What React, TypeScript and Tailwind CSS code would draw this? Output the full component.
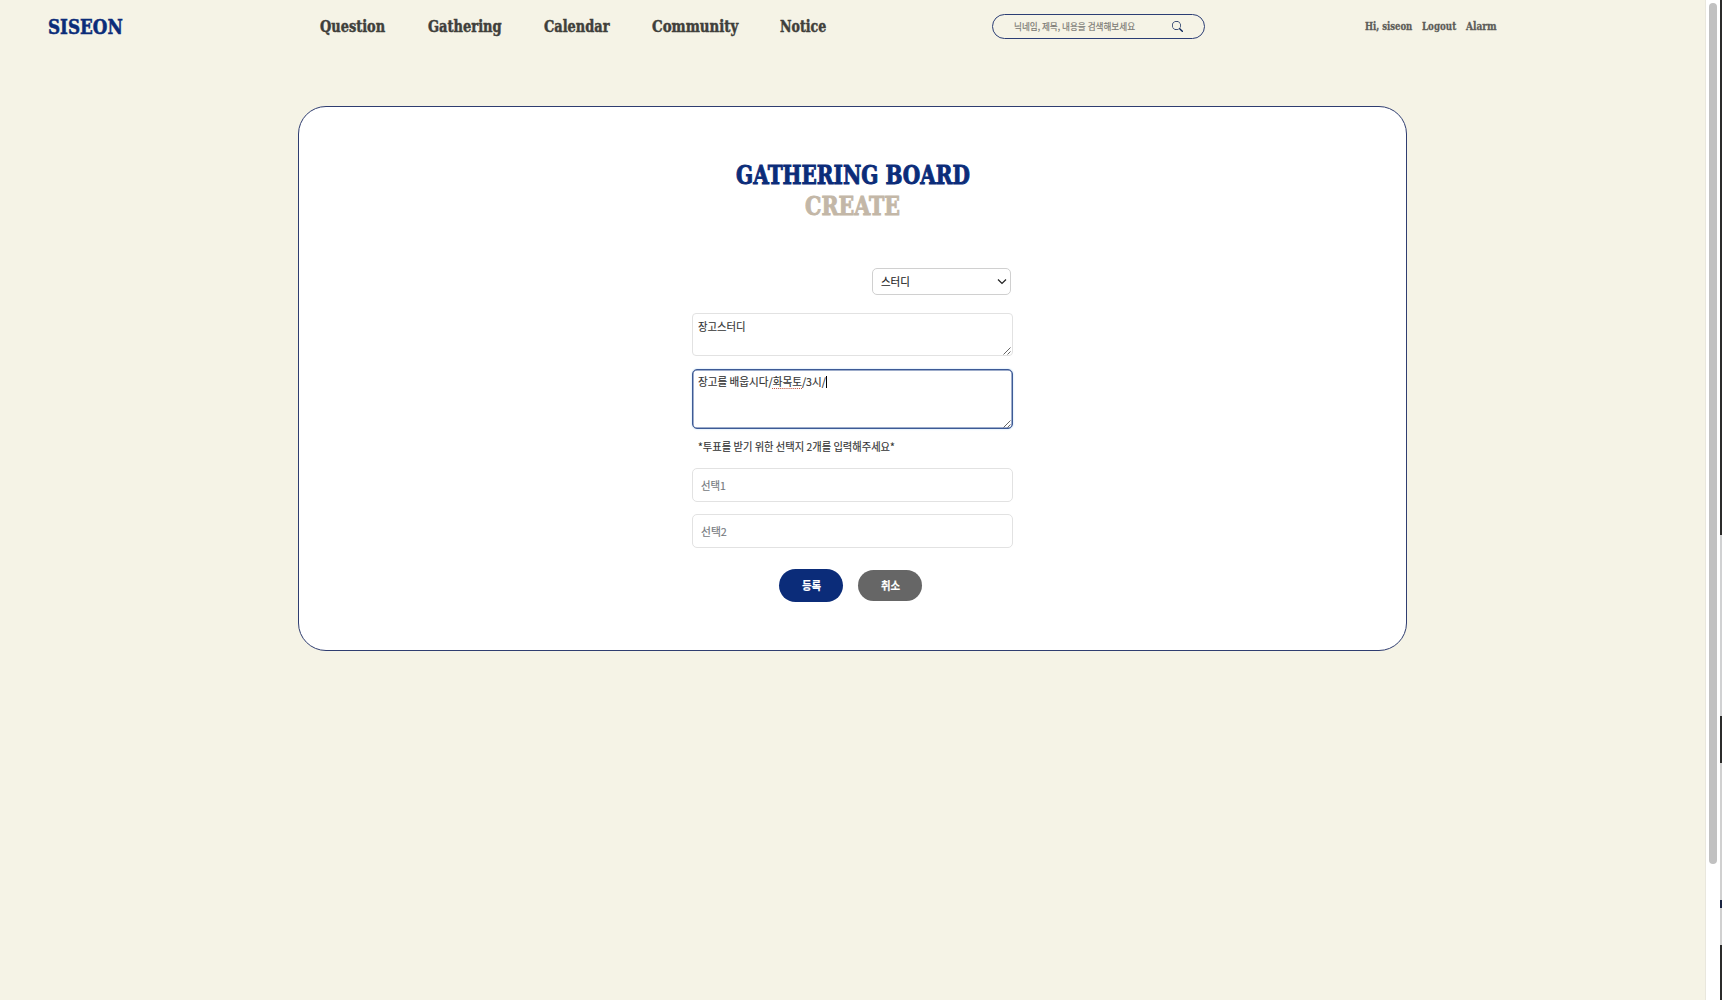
import { useLayoutEffect, useRef, useState } from 'react'
import type { ReactNode } from 'react'

/* One line of text, condensed or expanded to the given advance width. */
function Fit({ width, className = '', children }: { width: number; className?: string; children: ReactNode }) {
  const ref = useRef<HTMLSpanElement>(null)
  const [scale, setScale] = useState(1)
  useLayoutEffect(() => {
    if (ref.current) setScale(width / ref.current.offsetWidth)
  }, [width])
  return (
    <span className="flex shrink-0 items-start" style={{ width }}>
      <span ref={ref} className={`block shrink-0 origin-left whitespace-nowrap ${className}`} style={{ transform: `scaleX(${scale})` }}>
        {children}
      </span>
    </span>
  )
}

const serif = "font-['DejaVu_Serif',serif] font-bold"

const nav = [
  { label: 'Question', width: 65.5 },
  { label: 'Gathering', width: 74 },
  { label: 'Calendar', width: 65.5 },
  { label: 'Community', width: 86 },
  { label: 'Notice', width: 46.5 },
]

const account = [
  { label: 'Hi, siseon', width: 47 },
  { label: 'Logout', width: 34 },
  { label: 'Alarm', width: 31 },
]

function Grip() {
  return (
    <svg className="absolute right-[1px] bottom-0 size-[8px]" viewBox="0 0 8 8" fill="none" stroke="#555" strokeWidth="0.9">
      <path d="M0.5 7.5 7.5 0.5M4.5 7.5 7.5 4.5" />
    </svg>
  )
}

function Header() {
  return (
    <header className="flex h-[53px] items-center">
      <div className="ml-[48px] w-[272px]">
        <Fit width={75} className={`${serif} text-[21px] leading-[24px] text-[#0b2c79] [-webkit-text-stroke:0.6px]`}>SISEON</Fit>
      </div>
      <nav className="flex w-[672px] gap-[42.2px]">
        {nav.map((n) => (
          <Fit key={n.label} width={n.width} className={`${serif} text-[16px] leading-[22px] text-[#3f3f3b] [-webkit-text-stroke:0.5px]`}>{n.label}</Fit>
        ))}
      </nav>
      <div className="flex h-[25px] w-[213px] items-center rounded-full border border-[#2b3d74] pb-px pl-[20.5px]">
        <Fit width={121} className="text-[9.5px] leading-[14px] text-[#7d7c76] [-webkit-text-stroke:0.2px]">닉네임, 제목, 내용을 검색해보세요</Fit>
        <svg className="ml-[37px] size-[11px]" viewBox="0 0 16 16" fill="#0b2459">
          <path d="M11.742 10.344a6.5 6.5 0 1 0-1.397 1.398h-.001q.044.06.098.115l3.85 3.85a1 1 0 0 0 1.415-1.414l-3.85-3.85a1 1 0 0 0-.115-.1zM12 6.5a5.5 5.5 0 1 1-11 0 5.5 5.5 0 0 1 11 0" />
        </svg>
      </div>
      <div className="ml-[160px] flex gap-[10px] pb-[2px]">
        {account.map((a) => (
          <Fit key={a.label} width={a.width} className={`${serif} text-[10.5px] leading-[16px] text-[#5d5d59] [-webkit-text-stroke:0.3px]`}>{a.label}</Fit>
        ))}
      </div>
    </header>
  )
}

function Form() {
  return (
    <main className="ml-[298px] mt-[53px] flex h-[545px] w-[1109px] flex-col items-center rounded-[28px] border border-[#2f3d70] bg-white">
      <h1 className="mt-[53px] flex flex-col items-center">
        <Fit width={234} className={`${serif} text-[26px] leading-[31px] text-[#0b2c79] [-webkit-text-stroke:1px]`}>GATHERING BOARD</Fit>
        <Fit width={95} className={`${serif} text-[26px] leading-[31px] text-[#c3b7a7] [-webkit-text-stroke:1px]`}>CREATE</Fit>
      </h1>
      <div className="mt-[46px] flex w-[321px] flex-col text-[11px] leading-[16px] text-[#333] [-webkit-text-stroke:0.15px]">
        <div className="mr-[2px] flex h-[27px] w-[139px] items-center justify-between self-end rounded-[5px] border border-[#d0d0d0] pb-px pl-[8px] pr-[3px] text-[#222]">
          <Fit width={28.5}>스터디</Fit>
          <svg className="size-[10px]" viewBox="0 0 10 10" fill="none" stroke="#222" strokeWidth="1.2">
            <path d="M1 3.5 5 7.5 9 3.5" />
          </svg>
        </div>
        <div className="relative mt-[18px] h-[43px] rounded-[4px] border border-[#e2e2e2] pl-[5px] pt-[4px]">
          <Fit width={48}>장고스터디</Fit>
          <Grip />
        </div>
        <div className="relative mt-[13px] flex h-[60px] rounded-[5px] border border-[#3d5a96] pl-[5px] pt-[3px] shadow-[inset_0_0_0_0.5px_#3d5a96,0_0_2px_#b5d8f5]">
          <Fit width={128}>
            장고를 배웁시다/<span className="underline decoration-[#c0503c] decoration-dotted decoration-1 underline-offset-2">화목토</span>/3시/
          </Fit>
          <span className="mt-[3px] h-[12px] w-px bg-black" />
          <Grip />
        </div>
        <div className="mt-[9px] pl-[5.5px]">
          <Fit width={197}>*투표를 받기 위한 선택지 2개를 입력해주세요*</Fit>
        </div>
        <div className="mt-[14px] flex h-[34px] items-center rounded-[5px] border border-[#e2e2e2] pb-px pl-[8px] text-[#74787d]">
          <Fit width={24.5}>선택1</Fit>
        </div>
        <div className="mt-[12px] flex h-[34px] items-center rounded-[5px] border border-[#e2e2e2] pb-px pl-[8px] text-[#74787d]">
          <Fit width={25.5}>선택2</Fit>
        </div>
        <div className="mt-[21px] flex items-center gap-[15px] pl-[87px] font-bold text-white">
          <button className="flex h-[33px] w-[64px] items-center justify-center rounded-full bg-[#0b2c79] pb-px">
            <Fit width={19}>등록</Fit>
          </button>
          <button className="flex h-[31px] w-[64px] items-center justify-center rounded-full bg-[#666] pb-px">
            <Fit width={19}>취소</Fit>
          </button>
        </div>
      </div>
    </main>
  )
}

/* Strips of the windows that lie behind the browser, from top to bottom. */
const edge = [
  { h: 535, c: 'bg-[#2b2b2a]' },
  { h: 181, c: 'bg-[#d0d1d2]' },
  { h: 47, c: 'bg-[#2b2b2a]' },
  { h: 137, c: 'bg-[#d0d0d0]' },
  { h: 8, c: 'bg-[#1b2542]' },
  { h: 37, c: 'bg-[#d0d0d0]' },
  { h: 55, c: 'bg-[#2b2b2a]' },
]

export default function App() {
  return (
    <div className="flex h-[1000px] w-[1722px] overflow-hidden bg-[#f5f3e6] font-['Noto_Sans_CJK_KR',sans-serif]">
      <div className="w-[1705px] shrink-0">
        <Header />
        <Form />
      </div>
      <div className="w-[15px] shrink-0 border-l border-[#e9e7dd] bg-white pl-[3px] pt-[3px]">
        <div className="h-[861px] w-[8px] rounded-full bg-[#c1c1c1]" />
      </div>
      <div className="flex w-[2px] shrink-0 flex-col">
        {edge.map((e, i) => (
          <div key={i} className={`w-full shrink-0 ${e.c}`} style={{ height: e.h }} />
        ))}
      </div>
    </div>
  )
}
